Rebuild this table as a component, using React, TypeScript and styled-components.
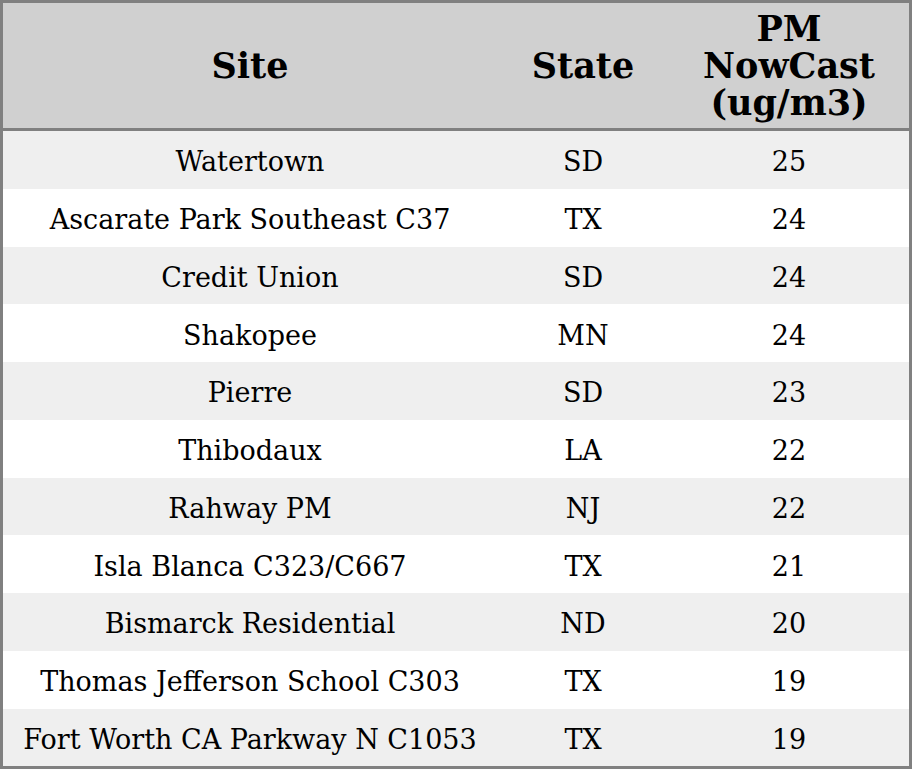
import styled, { createGlobalStyle } from "styled-components";

const GlobalStyle = createGlobalStyle`
  body {
    margin: 0;
    background: #ffffff;
    font-family: "DejaVu Serif", serif;
  }
`;

const Table = styled.table`
  width: 912px;
  border-collapse: separate;
  border-spacing: 0;
  border: 3px solid #808080;
  font-family: "DejaVu Serif", serif;
  color: #000;
  table-layout: fixed;
`;

const HeadRow = styled.tr`
  background-color: #d0d0d0;
`;

const HeadCell = styled.th<{ $width: number }>`
  width: ${(p) => p.$width}px;
  height: 128px;
  padding: 0 4px;
  box-sizing: border-box;
  border-bottom: 3px solid #808080;
  font-size: 35px;
  font-weight: bold;
  line-height: 37px;
  text-align: center;
  vertical-align: middle;
`;

const Row = styled.tr<{ $striped: boolean }>`
  background-color: ${(p) => (p.$striped ? "#efefef" : "#ffffff")};
`;

const Cell = styled.td`
  height: 57.75px;
  padding: 4px 4px 0;
  box-sizing: border-box;
  font-size: 27px;
  text-align: center;
  vertical-align: middle;
  white-space: nowrap;
`;

const rows: [string, string, number][] = [
  ["Watertown", "SD", 25],
  ["Ascarate Park Southeast C37", "TX", 24],
  ["Credit Union", "SD", 24],
  ["Shakopee", "MN", 24],
  ["Pierre", "SD", 23],
  ["Thibodaux", "LA", 22],
  ["Rahway PM", "NJ", 22],
  ["Isla Blanca C323/C667", "TX", 21],
  ["Bismarck Residential", "ND", 20],
  ["Thomas Jefferson School C303", "TX", 19],
  ["Fort Worth CA Parkway N C1053", "TX", 19],
];

const App = () => {
  return (
    <>
      <GlobalStyle />
      <Table>
        <thead>
          <HeadRow>
            <HeadCell $width={494}>Site</HeadCell>
            <HeadCell $width={172}>State</HeadCell>
            <HeadCell $width={240}>
              PM
              <br />
              NowCast
              <br />
              (ug/m3)
            </HeadCell>
          </HeadRow>
        </thead>
        <tbody>
          {rows.map(([site, state, value], i) => (
            <Row key={site} $striped={i % 2 === 0}>
              <Cell>{site}</Cell>
              <Cell>{state}</Cell>
              <Cell>{value}</Cell>
            </Row>
          ))}
        </tbody>
      </Table>
    </>
  );
};

export default App;
